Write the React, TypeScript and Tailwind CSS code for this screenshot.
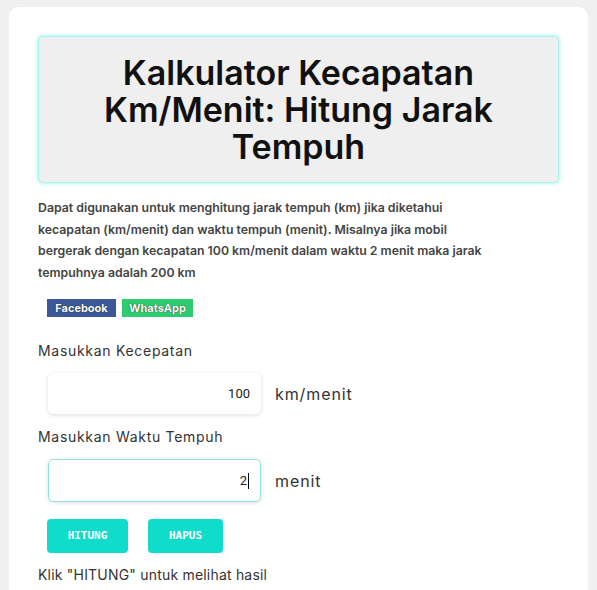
import React from "react";

const font = { fontFamily: "Inter, 'Noto Sans', sans-serif" };

const Field = ({ label, value, unit, focused, top }: { label: string; value: string; unit: string; focused?: boolean; top: string }) => (
    <div className={top}>
        <p className="text-[14px] leading-[20px] text-[#333] tracking-[0.7px]">{label}</p>
        <div className="flex items-center gap-[14px] mt-[12px] ml-[10px]">
            <div
                className={
                    focused
                        ? "w-[213px] h-[43px] rounded-[5px] bg-white border border-[#8ee8e0] shadow-[0_1px_4px_rgba(0,0,0,0.12)] flex items-center justify-end pr-[11px]"
                        : "w-[213px] h-[41px] rounded-[5px] bg-white shadow-[0_1px_4px_rgba(0,0,0,0.14)] flex items-center justify-end pr-[11px]"
                }
            >
                <span className="text-[13px] text-[#222] font-['Roboto',sans-serif]">{value}</span>
                {focused && <span className="w-px h-[16px] bg-black ml-px" />}
            </div>
            <span className="text-[16px] text-[#333] tracking-[0.9px]">{unit}</span>
        </div>
    </div>
);

const App = () => {
    return (
        <div className="min-h-screen bg-[#f0f0f0] pt-[7px] px-[9px]" style={font}>
            <div className="bg-white rounded-[10px] px-[29px] pt-[29px] pb-[20px]">
                <div className="bg-[#efefef] border border-[#a8f3ee] rounded-[5px] shadow-[0_0_4px_rgba(64,230,220,0.6)] py-[17px] text-center">
                    <h1 className="text-[34px] leading-[37px] font-semibold text-[#111]">
                        Kalkulator Kecapatan
                        <br />
                        Km/Menit: Hitung Jarak
                        <br />
                        Tempuh
                    </h1>
                </div>

                <p className="mt-[14px] text-[12.3px] leading-[21.6px] font-semibold text-[#444]">
                    Dapat digunakan untuk menghitung jarak tempuh (km) jika diketahui
                    <br />
                    kecapatan (km/menit) dan waktu tempuh (menit). Misalnya jika mobil
                    <br />
                    bergerak dengan kecapatan 100 km/menit dalam waktu 2 menit maka jarak
                    <br />
                    tempuhnya adalah 200 km
                </p>

                <div className="flex gap-[6px] ml-[9px] mt-[16px]">
                    <span className="w-[69px] h-[18px] bg-[#3b5998] text-white text-[11px] font-bold flex items-center justify-center [text-shadow:0_0_1px_#000]">
                        Facebook
                    </span>
                    <span className="w-[71px] h-[18px] bg-[#2ecc71] text-white text-[11px] font-bold flex items-center justify-center [text-shadow:0_0_1px_#000]">
                        WhatsApp
                    </span>
                </div>

                <Field top="mt-[24px]" label="Masukkan Kecepatan" value="100" unit="km/menit" />
                <Field top="mt-[13px]" label="Masukkan Waktu Tempuh" value="2" unit="menit" focused />

                <div className="flex gap-[20px] ml-[9px] mt-[17px]">
                    <button className="w-[81px] h-[34px] rounded-[4px] bg-[#10dccb] text-white text-[11px] font-bold font-['DejaVu_Sans_Mono',monospace]">
                        HITUNG
                    </button>
                    <button className="w-[75px] h-[34px] rounded-[4px] bg-[#10dccb] text-white text-[11px] font-bold font-['DejaVu_Sans_Mono',monospace]">
                        HAPUS
                    </button>
                </div>

                <p className="mt-[12px] text-[14px] leading-[20px] text-[#333] tracking-[0.2px]">Klik "HITUNG" untuk melihat hasil</p>
            </div>
        </div>
    );
};

export default App;
